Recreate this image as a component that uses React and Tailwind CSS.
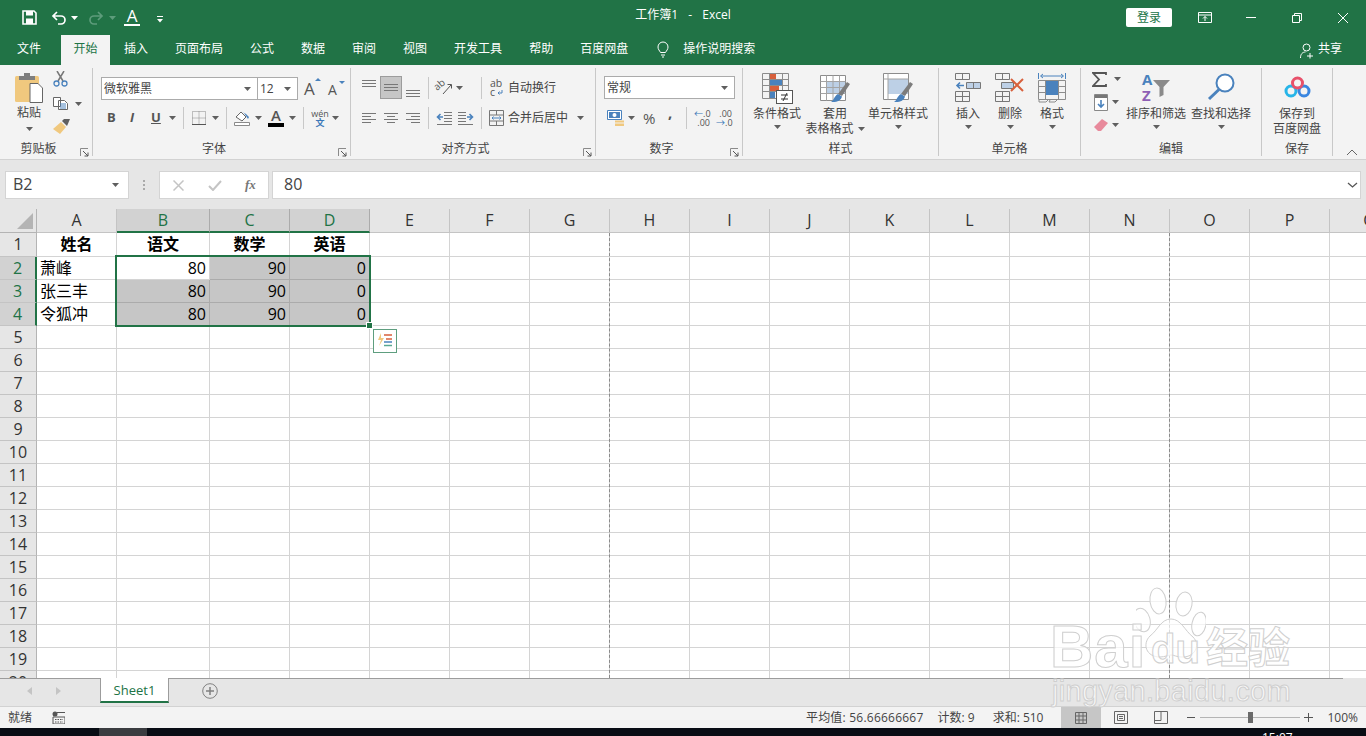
import React from 'react'

const BLUE = '#4a82bd'

function Caret({ className = '', color = '#5f5f5f' }) {
  return (
    <svg width="7" height="4" viewBox="0 0 7 4" className={`shrink-0 ${className}`}>
      <path d="M0 0h7L3.500 4z" fill={color} />
    </svg>
  )
}

function Sep({ className = '' }) {
  return <div className={`w-px h-[22px] bg-[#c8c8c8] shrink-0 ${className}`} />
}

function Launcher() {
  return (
    <svg width="9" height="9" viewBox="0 0 9 9" className="shrink-0 ml-[3px] mr-[3px] mt-[12px]">
      <path d="M.5 8V.5H8" fill="none" stroke="#8a8a8a" />
      <path d="M3 3l5 5M8 4.500V8H4.500" fill="none" stroke="#555" />
    </svg>
  )
}

function Lines({ items, className = '' }) {
  return (
    <svg width="14" height="16" viewBox="0 0 14 16" className={`shrink-0 ${className}`}>
      {items.map(([x1, x2, y]) => (
        <path key={y} d={`M${x1} ${y + 0.5}H${x2}`} stroke="#777" />
      ))}
    </svg>
  )
}

function IndentIcon({ flip, className = '' }) {
  return (
    <svg width="16" height="14" viewBox="0 0 16 14" className={`shrink-0 ${className}`}>
      <g transform={flip ? 'translate(16 0) scale(-1 1)' : undefined}>
        <path d="M8 1.500h8M8 4.500h8M8 7.500h8M8 10.500h8M1 13.500h15" stroke="#777" fill="none" />
        <path d="M7 6H2M4.500 3L1.500 6l3 3" stroke={BLUE} strokeWidth="1.600" fill="none" />
      </g>
    </svg>
  )
}

function Brush({ x = 0, y = 0 }) {
  return (
    <g transform={`translate(${x} ${y})`}>
      <path d="M8 14l9-12 3 2-8 12z" fill="#7c7c7c" />
      <path d="M8 14l4 2.500c-1 4-5 6-11 5.500 3-1.500 3-6 7-8z" fill={BLUE} />
    </g>
  )
}

function LargeIcon({ name }) {
  if (name === 'cond') {
    return (
      <svg width="31" height="31" viewBox="0 0 31 31">
        <path d="M.5.5h26v25H.5zM7.500.5v25M20.500.5v25M.5 6.500h26M.5 12.500h26M.5 18.500h26" fill="none" stroke="#8c8c8c" />
        <rect x="8" y="1" width="6" height="5" fill="#d8603c" />
        <rect x="8" y="7" width="12" height="5" fill={BLUE} />
        <rect x="8" y="13" width="9" height="5" fill="#d8603c" />
        <rect x="8" y="19" width="5" height="6" fill={BLUE} />
        <rect x="14.500" y="17.500" width="16" height="13" fill="#fff" stroke="#555" />
        <path d="M19 22h7M19 26h7M25 20l-4 8" stroke="#333" fill="none" />
      </svg>
    )
  }
  if (name === 'table') {
    return (
      <svg width="31" height="31" viewBox="0 0 31 31">
        <path d="M.5 2.500h25v25H.5z" fill="#fff" stroke="#8c8c8c" />
        <rect x="7" y="9" width="18" height="11" fill="#bdd0e6" />
        <path d="M6.500 2.500v25M13 2.500v25M19.500 2.500v25M.5 8.500h25M.5 14.500h25M.5 20.500h25" fill="none" stroke="#a4a4a4" />
        <Brush x="10" y="7" />
      </svg>
    )
  }
  if (name === 'style') {
    return (
      <svg width="31" height="31" viewBox="0 0 31 31">
        <path d="M.5.5h25v26H.5z" fill="#fff" stroke="#8c8c8c" />
        <rect x="5" y="6" width="20" height="15" fill="#bdd0e6" />
        <path d="M5 .5v26M.5 6h25" fill="none" stroke="#a4a4a4" />
        <Brush x="10" y="7" />
      </svg>
    )
  }
  if (name === 'insert') {
    return (
      <svg width="27" height="30" viewBox="0 0 27 30">
        <path d="M.5.5h14v6H.5zM7.500.5v6M.5 18.500h14v10H.5zM7.500 18.500v10M.5 23.500h14" fill="none" stroke="#777" />
        <path d="M11.500 9.500h14v6h-14z" fill="#bdd0e6" stroke="#777" />
        <path d="M18.500 9.500v6" stroke="#777" />
        <path d="M9 12.500H2M5 9.500l-3 3 3 3" fill="none" stroke={BLUE} strokeWidth="1.600" />
      </svg>
    )
  }
  if (name === 'delete') {
    return (
      <svg width="30" height="30" viewBox="0 0 30 30">
        <path d="M.5.5h14v6H.5zM7.500.5v6M.5 18.500h14v10H.5zM7.500 18.500v10M.5 23.500h14" fill="none" stroke="#777" />
        <path d="M6.500 9.500h12v6h-12z" fill="#bdd0e6" stroke="#777" />
        <path d="M16 6l12 12M28 6L16 18" stroke="#d8603c" strokeWidth="2" />
      </svg>
    )
  }
  if (name === 'format') {
    return (
      <svg width="28" height="30" viewBox="0 0 28 30">
        <path d="M.5 0v6M27.500 0v6M3 3h22" stroke={BLUE} fill="none" />
        <path d="M5 1L2.500 3 5 5M23 1l2.500 2L23 5" stroke={BLUE} fill="none" />
        <path d="M.5 7.500h27v19H.5zM.5 13.500h27M.5 19.500h27M7.500 7.500v19M20.500 7.500v19" fill="none" stroke="#8c8c8c" />
        <rect x="8" y="8" width="12" height="14" fill={BLUE} />
        <path d="M1 27v2h7l2-2M12 27l-1 2h6l2-2" fill="none" stroke="#8c8c8c" />
      </svg>
    )
  }
  if (name === 'sort') {
    return (
      <svg width="30" height="30" viewBox="0 0 30 30" className="overflow-visible">
        <text x="1" y="12" fontSize="15" fontWeight="700" fill={BLUE} fontFamily="Open Sans, sans-serif">A</text>
        <text x="1" y="28" fontSize="15" fontWeight="700" fill="#8e5fb5" fontFamily="Open Sans, sans-serif">Z</text>
        <path d="M12 7h17l-6.500 7v8l-4 2V14z" fill="#8a8a8a" />
      </svg>
    )
  }
  if (name === 'find') {
    return (
      <svg width="28" height="28" viewBox="0 0 28 28">
        <circle cx="18" cy="10" r="8.500" fill="#fff" stroke={BLUE} strokeWidth="2" />
        <path d="M12 16.500L2 26" stroke={BLUE} strokeWidth="3" />
      </svg>
    )
  }
  return (
    <svg width="27" height="22" viewBox="0 0 27 22">
      <circle cx="7" cy="15" r="5" fill="none" stroke="#27b5e8" strokeWidth="3" />
      <circle cx="20" cy="15" r="5" fill="none" stroke="#3a86e0" strokeWidth="3" />
      <circle cx="13.500" cy="7" r="5" fill="none" stroke="#e8506a" strokeWidth="3" />
    </svg>
  )
}

function LargeBtn({ icon, lines, width, gap = '', twoLine }) {
  return (
    <div className={`flex flex-col items-center shrink-0 ${width} ${gap}`}>
      <div className="h-[38px] pt-[5px] flex justify-center">
        <LargeIcon name={icon} />
      </div>
      {lines.map((l, i) => (
        <div key={l} className="h-[15px] leading-[15px] whitespace-nowrap flex items-center">
          {l}
          {twoLine && i === 1 && <Caret className="ml-[4px]" />}
        </div>
      ))}
      {!twoLine && <Caret className="mt-[4px]" />}
    </div>
  )
}

function Group({ width, label, launcher, children }) {
  return (
    <div className={`${width} h-[88px] shrink-0 flex flex-col border-r border-[#c8c8c8]`}>
      <div className="flex-1 min-h-0">{children}</div>
      <div className="h-5 flex text-[#444]">
        <div className="flex-1 text-center leading-[25px]">{label}</div>
        {launcher && <Launcher />}
      </div>
    </div>
  )
}

function Combo({ width, text, className = '' }) {
  return (
    <div className={`${width} h-[23px] bg-white border border-[#ababab] flex items-center justify-between pl-[2px] pr-[6px] ${className}`}>
      <span className="text-[#444]">{text}</span>
      <Caret />
    </div>
  )
}

function Clipboard() {
  return (
    <Group width="w-[93px]" label="剪贴板" launcher>
      <div className="flex h-full">
        <div className="ml-[17px] w-6 flex flex-col items-center pt-[4px]">
          <svg width="28" height="31" viewBox="0 0 28 31" className="shrink-0">
            <rect x="0" y="4" width="24" height="26" rx="1.500" fill="#f0c87e" />
            <path d="M4 4h16v4H4zM9 1h6v4H9z" fill="#7e7e7e" />
            <path d="M15 11.500h8l4.500 4.500v14.500H15z" fill="#fff" stroke="#666" />
          </svg>
          <div className="mt-[2px] leading-[15px] text-[#444]">粘贴</div>
          <Caret className="mt-[7px]" />
        </div>
        <div className="ml-[12px] flex flex-col">
          <svg width="15" height="16" viewBox="0 0 15 16" className="mt-[3px]">
            <path d="M4 0l6 10M11 0L5 10" stroke="#777" strokeWidth="1.500" />
            <circle cx="3.500" cy="12.500" r="2.500" fill="none" stroke={BLUE} strokeWidth="1.300" />
            <circle cx="11.500" cy="12.500" r="2.500" fill="none" stroke={BLUE} strokeWidth="1.300" />
          </svg>
          <div className="flex items-center mt-[10px]">
            <svg width="16" height="13" viewBox="0 0 16 13">
              <path d="M.5.5h7v9h-7zM5.500 3.500h6l3 3v6h-9z" fill="#fff" stroke="#666" />
              <path d="M7 7h6M7 9h6M7 11h6" stroke={BLUE} />
            </svg>
            <Caret className="ml-[6px]" />
          </div>
          <svg width="18" height="15" viewBox="0 0 18 15" className="mt-[9px]">
            <path d="M0 10l8-7 5 5-6 7z" fill="#f0c87e" />
            <path d="M9 2l2-2 6 0-3 7z" fill="#5f5f5f" />
          </svg>
        </div>
      </div>
    </Group>
  )
}

function FontGroup() {
  return (
    <Group width="w-[258px]" label="字体" launcher>
      <div className="flex items-center mt-[9px] ml-[8px]">
        <Combo width="w-[157px]" text="微软雅黑" />
        <Combo width="w-[41px]" text="12" className="-ml-px" />
        <span className="ml-[6px] text-[17px] leading-none text-[#555] w-[14px] relative">A<i className="absolute -right-[3px] -top-[2px] border-x-[3px] border-b-[3px] border-x-transparent border-b-[#4a82bd]" /></span>
        <span className="ml-[10px] text-[14px] leading-none text-[#555] w-[12px] relative mt-[2px]">A<i className="absolute -right-[5px] -top-[2px] border-x-[3px] border-t-[3px] border-x-transparent border-t-[#4a82bd]" /></span>
      </div>
      <div className="flex items-center mt-[7px] ml-[8px] h-[22px]">
        <span className="ml-[6px] w-[9px] font-bold text-[#555] text-[13px]">B</span>
        <span className="ml-[14px] w-[8px] italic font-bold text-[#555] text-[13px]">I</span>
        <span className="ml-[13px] w-[11px] underline font-bold text-[#555] text-[13px]">U</span>
        <Caret className="ml-[7px]" />
        <Sep className="ml-[7px]" />
        <svg width="14" height="14" viewBox="0 0 14 14" className="ml-[8px]">
          <path d="M.5.500h13v13H.5zM7 .500v13M.5 7h13" fill="none" stroke="#888" strokeDasharray="1 1" />
          <path d="M0 13.500h14" stroke="#555" />
        </svg>
        <Caret className="ml-[6px]" />
        <Sep className="ml-[7px]" />
        <svg width="17" height="16" viewBox="0 0 17 16" className="ml-[7px]">
          <path d="M2 7l5-5 5 5-4 4z" fill="#fff" stroke="#666" />
          <path d="M7 1l5 3 3 3-1 2-4-6z" fill={BLUE} />
          <path d="M.5 12.500h15v3H.5z" fill="#fff" stroke="#8a8a8a" />
        </svg>
        <Caret className="ml-[4px]" />
        <div className="ml-[6px] w-[16px] flex flex-col items-center">
          <span className="text-[15px] leading-[13px] text-[#555] font-semibold">A</span>
          <div className="w-[16px] h-[4px] bg-black mt-px" />
        </div>
        <Caret className="ml-[5px]" />
        <Sep className="ml-[7px]" />
        <div className="ml-[8px] w-[16px] flex flex-col items-center text-[9px] leading-[9px]">
          <span className="text-[#555]">wén</span>
          <span className="text-[#3b78b8] font-bold">文</span>
        </div>
        <Caret className="ml-[4px]" />
      </div>
    </Group>
  )
}

function AlignGroup() {
  const mid = [[0, 14, 4], [0, 14, 7], [0, 14, 10]]
  return (
    <Group width="w-[245px]" label="对齐方式" launcher>
      <div className="flex items-center mt-[8px] ml-[11px] h-[23px]">
        <Lines items={[[0, 14, 2], [0, 14, 5], [0, 14, 8]]} className="-mt-[4px]" />
        <div className="ml-[4px] w-[22px] h-[23px] bg-[#c6c6c6] border border-[#9c9c9c] flex items-center justify-center">
          <Lines items={mid} />
        </div>
        <Lines items={[[0, 14, 8], [0, 14, 11], [0, 14, 14]]} className="ml-[4px] mt-[4px]" />
        <Sep className="ml-[8px]" />
        <svg width="16" height="15" viewBox="0 0 16 15" className="ml-[8px] overflow-visible">
          <text x="0" y="11" fontSize="10" fill="#555" fontFamily="Open Sans, sans-serif" transform="rotate(-40 0 11)">ab</text>
          <path d="M6 14l8-9M10.500 4.500h4v4" stroke="#555" fill="none" />
        </svg>
        <Caret className="ml-[3px]" />
        <Sep className="ml-[18px]" />
        <svg width="14" height="18" viewBox="0 0 14 18" className="ml-[8px] shrink-0 overflow-visible">
          <text x="0" y="8" fontSize="10.500" fill="#555" fontFamily="Open Sans, sans-serif">ab</text>
          <text x="0" y="17" fontSize="10.500" fill="#555" fontFamily="Open Sans, sans-serif">c</text>
          <path d="M12 11v3H8M9.500 12.500L8 14l1.500 1.500" fill="none" stroke={BLUE} />
        </svg>
        <span className="ml-[4px] text-[#444]">自动换行</span>
      </div>
      <div className="flex items-center mt-[8px] ml-[11px] h-[22px]">
        <Lines items={[[0, 14, 3], [0, 9, 6], [0, 14, 9], [0, 9, 12]]} />
        <Lines items={[[0, 14, 3], [3, 11, 6], [0, 14, 9], [3, 11, 12]]} className="ml-[8px]" />
        <Lines items={[[0, 14, 3], [5, 14, 6], [0, 14, 9], [5, 14, 12]]} className="ml-[8px]" />
        <Sep className="ml-[8px]" />
        <IndentIcon className="ml-[7px]" />
        <IndentIcon flip className="ml-[6px]" />
        <Sep className="ml-[7px]" />
        <svg width="15" height="16" viewBox="0 0 15 16" className="ml-[7px]">
          <path d="M.5.500h14v15H.5zM.5 5h14M.5 11h14M7.500.500V5M7.500 11v4.500" fill="none" stroke="#777" />
          <path d="M3 8h9M4.500 6.500L3 8l1.500 1.500M10.500 6.500L12 8l-1.500 1.500" fill="none" stroke={BLUE} />
        </svg>
        <span className="ml-[4px] text-[#444] w-[60px] leading-[24px]">合并后居中</span>
        <Caret className="ml-[9px]" />
      </div>
    </Group>
  )
}

function NumberGroup() {
  return (
    <Group width="w-[147px]" label="数字" launcher>
      <div className="flex items-center mt-[8px] ml-[8px]">
        <Combo width="w-[131px]" text="常规" />
      </div>
      <div className="flex items-center mt-[8px] ml-[8px] h-[22px]">
        <svg width="17" height="16" viewBox="0 0 17 16" className="ml-[3px]">
          <path d="M.5.500h14v9H.5z" fill="#fff" stroke={BLUE} />
          <rect x="2" y="2" width="11" height="6" fill={BLUE} />
          <circle cx="7.500" cy="5" r="2" fill="#fff" />
          <path d="M8 10.500h9v2H8zM8 13.500h9v2.500H8z" fill="#f0c87e" />
        </svg>
        <Caret className="ml-[4px]" />
        <span className="ml-[8px] w-[13px] text-[15px] leading-none text-[#555]">%</span>
        <span className="ml-[12px] w-[6px] text-[15px] font-bold leading-none text-[#555] -mt-[12px]">,</span>
        <Sep className="ml-[12px]" />
        <div className="ml-[7px] w-[16px] text-[9px] leading-[9px] text-[#555] text-right whitespace-nowrap">
          <div><span className="text-[#3b78b8]">←</span>.0</div>
          <div>.00</div>
        </div>
        <div className="ml-[6px] w-[16px] text-[9px] leading-[9px] text-[#555] text-right whitespace-nowrap">
          <div>.00</div>
          <div><span className="text-[#3b78b8]">→</span>.0</div>
        </div>
      </div>
    </Group>
  )
}

function EditGroup() {
  return (
    <Group width="w-[181px]" label="编辑">
      <div className="flex text-[#444]">
        <div className="ml-[11px] w-[34px] shrink-0 flex flex-col">
          <div className="flex items-center h-[22px]">
            <svg width="15" height="15" viewBox="0 0 15 15">
              <path d="M14 3V1H1l6 6.500L1 14h13v-2" fill="none" stroke="#555" strokeWidth="1.800" />
            </svg>
            <Caret className="ml-[7px]" />
          </div>
          <div className="flex items-center h-[22px] mt-[1px]">
            <svg width="14" height="17" viewBox="0 0 14 17" className="ml-[2px]">
              <path d="M.5.500h13v16H.5z" fill="#fff" stroke="#888" />
              <rect x="1" y="1" width="12" height="3" fill="#777" />
              <path d="M7 6v7M4 10l3 3 3-3" fill="none" stroke={BLUE} strokeWidth="1.600" />
            </svg>
            <Caret className="ml-[4px]" />
          </div>
          <div className="flex items-center h-[22px] mt-[1px]">
            <svg width="15" height="14" viewBox="0 0 15 14" className="ml-[2px]">
              <path d="M0 9l8-8 6 4-7 8H4z" fill="#e88a9c" />
            </svg>
            <Caret className="ml-[3px]" />
          </div>
        </div>
        <LargeBtn icon="sort" lines={['排序和筛选']} width="w-[60px]" />
        <LargeBtn icon="find" lines={['查找和选择']} width="w-[60px]" gap="ml-[5px]" />
      </div>
    </Group>
  )
}

function Ribbon() {
  return (
    <div className="h-[95px] bg-[#f3f3f3] border-b border-[#d2d2d2] flex pt-[3px] text-[12px] text-[#444]">
      <Clipboard />
      <FontGroup />
      <AlignGroup />
      <NumberGroup />
      <Group width="w-[196px]" label="样式">
        <div className="flex">
          <LargeBtn icon="cond" lines={['条件格式']} width="w-[48px]" gap="ml-[10px]" />
          <LargeBtn icon="table" lines={['套用', '表格格式']} width="w-[60px]" gap="ml-[4px]" twoLine />
          <LargeBtn icon="style" lines={['单元格样式']} width="w-[60px]" gap="ml-[3px]" />
        </div>
      </Group>
      <Group width="w-[142px]" label="单元格">
        <div className="flex">
          <LargeBtn icon="insert" lines={['插入']} width="w-[40px]" gap="ml-[9px]" />
          <LargeBtn icon="delete" lines={['删除']} width="w-[40px]" gap="ml-[2px]" />
          <LargeBtn icon="format" lines={['格式']} width="w-[40px]" gap="ml-[2px]" />
        </div>
      </Group>
      <EditGroup />
      <Group width="w-[71px]" label="保存">
        <div className="flex flex-col items-center">
          <div className="h-[38px] pt-[8px]"><LargeIcon name="pan" /></div>
          <div className="leading-[15px]">保存到</div>
          <div className="leading-[15px]">百度网盘</div>
        </div>
      </Group>
      <div className="flex-1 flex items-end justify-end pr-[8px] pb-[3px]">
        <svg width="12" height="7" viewBox="0 0 12 7"><path d="M1 6l5-5 5 5" fill="none" stroke="#666" /></svg>
      </div>
    </div>
  )
}

function TitleBar() {
  return (
    <div className="h-[35px] bg-[#217346] flex items-center text-white text-[12px] relative">
      <svg width="15" height="15" viewBox="0 0 15 15" className="ml-[22px]">
        <path d="M1 1h11l2 2v11H1z" fill="none" stroke="#fff" strokeWidth="1.600" />
        <rect x="4" y="1" width="7" height="4.500" fill="#fff" />
        <rect x="4" y="8.500" width="7" height="5.500" fill="#fff" />
      </svg>
      <svg width="15" height="14" viewBox="0 0 15 14" className="ml-[14px]">
        <path d="M6 1L2 5l4 4M2 5h8a3.500 3.500 0 0 1 0 8H7" fill="none" stroke="#fff" strokeWidth="1.700" />
      </svg>
      <Caret className="ml-[5px]" color="#fff" />
      <svg width="15" height="14" viewBox="0 0 15 14" className="ml-[11px]">
        <path d="M9 1l4 4-4 4M13 5H5a3.500 3.500 0 0 0 0 8h3" fill="none" stroke="#5d9c7b" strokeWidth="1.700" />
      </svg>
      <Caret className="ml-[5px]" color="#5d9c7b" />
      <div className="ml-[8px] w-[16px] flex flex-col items-center">
        <span className="text-[17px] leading-[14px]">A</span>
        <div className="w-[16px] h-[2px] bg-white mt-[1px]" />
      </div>
      <svg width="6" height="7" viewBox="0 0 6 7" className="ml-[17px] mt-[4px]">
        <path d="M0 .500h6" stroke="#fff" />
        <path d="M0 3h6L3 6.500z" fill="#fff" />
      </svg>
      <div className="absolute left-0 right-0 top-[7px] text-center whitespace-pre leading-4 [word-spacing:2px]">工作簿1  -  Excel</div>
      <div className="ml-auto flex items-center">
        <div className="w-[46px] h-[19px] bg-white rounded-[2px] text-[#217346] text-center leading-[19px]">登录</div>
        <svg width="14" height="11" viewBox="0 0 14 11" className="ml-[26px]">
          <path d="M.5.500h13v10H.5zM.5 3h13" fill="none" stroke="#fff" />
          <path d="M7 9V4.500M5 6.500L7 4.500l2 2" fill="none" stroke="#fff" />
        </svg>
        <div className="ml-[34px] w-[10px] h-px bg-white" />
        <svg width="10" height="10" viewBox="0 0 10 10" className="ml-[36px]">
          <path d="M.5 2.500h7v7h-7zM2.500 2.500v-2h7v7h-2" fill="none" stroke="#fff" />
        </svg>
        <svg width="10" height="10" viewBox="0 0 10 10" className="ml-[36px] mr-[18px]">
          <path d="M0 0l10 10M10 0L0 10" stroke="#fff" />
        </svg>
      </div>
    </div>
  )
}

function TabBar() {
  const tabs = ['插入', '页面布局', '公式', '数据', '审阅', '视图', '开发工具', '帮助', '百度网盘']
  return (
    <div className="h-[30px] bg-[#217346] flex items-stretch text-white text-[12px] leading-[28px]">
      <div className="pl-[17px] pr-[20px]">文件</div>
      <div className="w-[49px] text-center bg-[#f3f3f3] text-[#217346] mr-[14px]">开始</div>
      {tabs.map((t) => (
        <div key={t} className="mr-[27px]">{t}</div>
      ))}
      <svg width="12" height="17" viewBox="0 0 12 17" className="ml-[2px] mt-[6px]">
        <path d="M3.500 11.500C2.500 9.500 1 8.500 1 6a5 5 0 0 1 10 0c0 2.500-1.500 3.500-2.500 5.500zM4 14h4M5 16h2" fill="none" stroke="#fff" />
      </svg>
      <div className="ml-[14px]">操作说明搜索</div>
      <div className="ml-auto flex mr-[24px]">
        <svg width="15" height="16" viewBox="0 0 15 16" className="mt-[8px] mr-[3px]">
          <circle cx="6.500" cy="4.500" r="3.500" fill="none" stroke="#fff" />
          <path d="M.5 15c0-4 2-6 5-6M10 10v5.500M7 13h6" fill="none" stroke="#fff" />
        </svg>
        共享
      </div>
    </div>
  )
}

function FormulaBar() {
  return (
    <div className="h-[49px] bg-[#e6e6e6] flex pl-[5px] pt-[11px] shrink-0">
      <div className="w-[124px] h-[28px] bg-white border border-[#d4d4d4] flex items-center justify-between pl-[7px] pr-[9px] text-[16px] leading-[24px] text-[#444]">
        <span className="-mt-[2px]">B2</span>
        <Caret />
      </div>
      <div className="w-[30px] h-[28px] flex items-center justify-center gap-[2px] flex-col">
        <i className="w-[2px] h-[2px] bg-[#aaa]" />
        <i className="w-[2px] h-[2px] bg-[#aaa]" />
        <i className="w-[2px] h-[2px] bg-[#aaa]" />
      </div>
      <div className="w-[110px] h-[28px] bg-white border border-[#d4d4d4] flex items-center">
        <svg width="11" height="11" viewBox="0 0 11 11" className="ml-[13px]">
          <path d="M.5.500l10 10M10.500.500l-10 10" stroke="#c4c4c4" strokeWidth="1.500" />
        </svg>
        <svg width="14" height="11" viewBox="0 0 14 11" className="ml-[24px]">
          <path d="M1 6l4 4 8-9" fill="none" stroke="#c4c4c4" strokeWidth="2" />
        </svg>
        <span className="ml-[23px] text-[13px] italic font-bold text-[#777] font-['Liberation_Serif',serif]">fx</span>
      </div>
      <div className="ml-[3px] w-[1089px] h-[28px] bg-white border border-[#d4d4d4] flex items-center justify-between pl-[11px] pr-[2px] text-[16px] text-[#444]">
        <span className="-mt-[2px]">80</span>
        <svg width="11" height="6" viewBox="0 0 11 6"><path d="M1 1l4.500 4L10 1" fill="none" stroke="#555" strokeWidth="1.300" /></svg>
      </div>
    </div>
  )
}

const columns = [
  { id: 'A', w: 'w-[80px]' },
  { id: 'B', w: 'w-[93px]', sel: true },
  { id: 'C', w: 'w-[80px]', sel: true },
  { id: 'D', w: 'w-[80px]', sel: true },
  ...'EFGHIJKLMNOPQ'.split('').map((id) => ({ id, w: 'w-[80px]' })),
]

const sheetData = {
  1: { A: '姓名', B: '语文', C: '数学', D: '英语' },
  2: { A: '萧峰', B: 80, C: 90, D: 0 },
  3: { A: '张三丰', B: 80, C: 90, D: 0 },
  4: { A: '令狐冲', B: 80, C: 90, D: 0 },
}

function ColumnHeader() {
  return (
    <div className="flex h-[24px] bg-[#e6e6e6] shrink-0">
      <div className="w-[37px] shrink-0 border-r border-b border-[#b4b4b4] flex items-end justify-end pr-[3px] pb-[3px]">
        <svg width="16" height="16" viewBox="0 0 16 16"><path d="M16 0v16H0z" fill="#b4b4b4" /></svg>
      </div>
      {columns.map((c) => (
        <div
          key={c.id}
          className={`${c.w} shrink-0 text-center text-[16px] leading-[22px] ${
            c.sel
              ? 'bg-[#d2d2d2] text-[#217346] border-r border-[#ababab] border-b-2 border-b-[#217346]'
              : 'text-[#333] border-r border-b border-[#c4c4c4]'
          }`}
        >
          {c.id}
        </div>
      ))}
    </div>
  )
}

function Row({ n }) {
  const data = sheetData[n] || {}
  const selRow = n >= 2 && n <= 4
  return (
    <div className={`flex shrink-0 ${n === 1 ? 'h-[24px]' : 'h-[23px]'}`}>
      <div
        className={`w-[37px] shrink-0 text-center text-[16px] leading-[22px] border-b border-[#c4c4c4] ${
          selRow
            ? 'bg-[#d2d2d2] text-[#217346] border-r-2 border-r-[#217346]'
            : 'bg-[#e6e6e6] text-[#333] border-r border-r-[#b4b4b4]'
        }`}
      >
        {n}
      </div>
      {columns.map((c) => {
        const v = data[c.id]
        const shaded = selRow && c.sel && !(n === 2 && c.id === 'B')
        const num = typeof v === 'number'
        return (
          <div
            key={c.id}
            className={`${c.w} shrink-0 text-[16px] leading-[22px] text-black border-r border-b whitespace-nowrap ${
              shaded ? 'bg-[#c6c6c6] border-[#ababab]' : 'border-[#d4d4d4]'
            } ${num ? 'text-right pr-[3px]' : n === 1 ? 'text-center font-bold' : 'pl-[3px]'}`}
          >
            {v}
          </div>
        )
      })}
    </div>
  )
}

function Watermark() {
  const letters = "font-['Liberation_Sans',sans-serif] text-white/70 [-webkit-text-stroke:1px_#cfcfcf]"
  return (
    <div className="absolute left-[1048px] top-[587px] w-[250px] h-[122px] pointer-events-none">
      <svg width="70" height="75" viewBox="0 0 70 75" className="absolute left-[88px] top-0">
        <g fill="#ffffff" fillOpacity="0.7" stroke="#cfcfcf">
          <ellipse cx="22" cy="14" rx="8" ry="13" transform="rotate(-8 22 14)" />
          <ellipse cx="48" cy="17" rx="8" ry="12" transform="rotate(10 48 17)" />
          <ellipse cx="6" cy="33" rx="8" ry="12" transform="rotate(-15 6 33)" />
          <ellipse cx="63" cy="37" rx="7" ry="12" transform="rotate(12 63 37)" />
          <path d="M35 32c10 0 14 12 22 18 8 8 2 21-12 20-4 0-7-2-10-2s-6 2-11 2c-14 0-18-13-10-21 8-6 11-17 21-17z" />
        </g>
      </svg>
      <span className={`absolute left-[2px] top-[30px] text-[60px] leading-[60px] font-bold tracking-[1px] ${letters}`}>Bai</span>
      <span className={`absolute left-[103px] top-[42px] text-[40px] leading-[40px] font-bold ${letters}`}>du</span>
      <span className="absolute left-[158px] top-[30px] text-[42px] leading-[56px] font-bold font-['Noto_Sans_CJK_SC'] text-white/70 [-webkit-text-stroke:1px_#cfcfcf]">经验</span>
      <span className={`absolute left-[4px] top-[86px] text-[29px] leading-[36px] tracking-[0.3px] whitespace-nowrap ${letters}`}>jingyan.baidu.com</span>
    </div>
  )
}

function Sheet() {
  const rows = Array.from({ length: 20 }, (_, i) => i + 1)
  return (
    <div className="flex-1 min-h-0 relative overflow-hidden bg-white flex flex-col">
      <ColumnHeader />
      {rows.map((n) => <Row key={n} n={n} />)}
      {/* page breaks */}
      <div className="absolute left-[609px] top-[24px] bottom-0 border-l border-dashed border-[#8a8a8a]" />
      <div className="absolute left-[1169px] top-[24px] bottom-0 border-l border-dashed border-[#8a8a8a]" />
      {/* selection box */}
      <div className="absolute left-[115px] top-[46px] w-[256px] h-[72px] border-2 border-[#217346]" />
      <div className="absolute left-[366px] top-[113px] w-[7px] h-[7px] bg-[#217346] border border-white" />
      <div className="absolute left-[373px] top-[120px] w-[24px] h-[24px] bg-white border border-[#5e9e7f] flex items-center justify-center">
        <svg width="16" height="16" viewBox="0 0 16 16">
          <path d="M4 0L1 7h3l-2 6 5-8H4z" fill="#f0c87e" />
          <path d="M7 2h8M9 6h6" stroke="#d8603c" strokeWidth="1.500" />
          <path d="M7 9h8" stroke="#4a82bd" strokeWidth="1.500" />
          <path d="M7 12.500h8" stroke="#5aa892" strokeWidth="1.500" />
        </svg>
      </div>
    </div>
  )
}

function SheetTabs() {
  return (
    <div className="h-[29px] shrink-0 bg-[#e6e6e6] border-b border-[#d2d2d2] relative flex">
      <div className="absolute top-0 left-0 w-[1343px] h-px bg-[#9c9c9c]" />
      <svg width="5" height="8" viewBox="0 0 5 8" className="ml-[27px] mt-[9px]"><path d="M5 0v8L0 4z" fill="#c4c4c4" /></svg>
      <svg width="5" height="8" viewBox="0 0 5 8" className="ml-[24px] mt-[9px]"><path d="M0 0v8l5-4z" fill="#c4c4c4" /></svg>
      <div className="ml-[39px] w-[69px] h-[25px] bg-white border-x border-[#9c9c9c] border-b-2 border-b-[#217346] relative text-center text-[13px] text-[#217346] leading-[25px]">
        Sheet1
      </div>
      <svg width="16" height="16" viewBox="0 0 16 16" className="ml-[33px] mt-[5px]">
        <circle cx="8" cy="8" r="7.300" fill="none" stroke="#808080" />
        <path d="M8 4v8M4 8h8" stroke="#808080" strokeWidth="1.500" />
      </svg>
    </div>
  )
}

function StatusBar() {
  return (
    <div className="h-[21px] shrink-0 bg-[#f3f3f3] flex items-center text-[12px] text-[#444]">
      <span className="ml-[8px]">就绪</span>
      <svg width="13" height="13" viewBox="0 0 13 13" className="ml-[20px]">
        <circle cx="3" cy="3" r="2.500" fill="#555" />
        <path d="M5 1.500h8M1 6h12v7H1z" stroke="#555" fill="none" />
        <path d="M3 8.500h8M3 11h8" stroke="#555" strokeDasharray="1.500 1" />
      </svg>
      <span className="ml-auto tracking-[0.22px]">平均值: 56.66666667</span>
      <span className="ml-[14px]">计数: 9</span>
      <span className="ml-[18px]">求和: 510</span>
      <div className="ml-[18px] w-[40px] h-full bg-[#c6c6c6] flex items-center justify-center">
        <svg width="12" height="12" viewBox="0 0 12 12">
          <path d="M.5.500h11v11H.5zM4 .500v11M8 .500v11M.5 4h11M.5 8h11" fill="none" stroke="#666" />
        </svg>
      </div>
      <svg width="14" height="13" viewBox="0 0 14 13" className="ml-[13px]">
        <path d="M.5.500h13v12H.5zM3.500 3.500h7v6h-7zM5 5.500h4M5 7.500h4" fill="none" stroke="#666" />
      </svg>
      <svg width="14" height="13" viewBox="0 0 14 13" className="ml-[26px]">
        <path d="M.5.500h13v12H.5zM.5 9.500h6.500V.500" fill="none" stroke="#666" />
      </svg>
      <div className="ml-[19px] w-[8px] h-px bg-[#555]" />
      <div className="ml-[5px] w-[100px] h-px bg-[#b4b4b4] relative">
        <div className="absolute left-[48px] -top-[5px] w-[5px] h-[11px] bg-[#6a6a6a]" />
      </div>
      <svg width="9" height="9" viewBox="0 0 9 9" className="ml-[4px]"><path d="M4.500 0v9M0 4.500h9" stroke="#555" /></svg>
      <span className="ml-[14px] mr-[8px]">100%</span>
    </div>
  )
}

function Taskbar() {
  return (
    <div className="h-[8px] shrink-0 bg-[#080c14] flex relative overflow-hidden">
      <div className="ml-[99px] w-[48px] bg-[#3a3c40]" />
      <span className="absolute left-[1262px] top-[2px] text-[12px] leading-4 text-white">15:07</span>
    </div>
  )
}

export default function App() {
  return (
    <div className="relative w-[1366px] h-[736px] overflow-hidden flex flex-col font-['Open_Sans','Noto_Sans_CJK_SC',sans-serif]">
      <TitleBar />
      <TabBar />
      <Ribbon />
      <FormulaBar />
      <Sheet />
      <SheetTabs />
      <StatusBar />
      <Taskbar />
      <Watermark />
    </div>
  )
}
